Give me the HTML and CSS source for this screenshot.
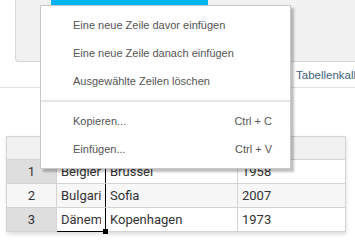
FILE: index.html
```html
<!DOCTYPE html>
<html>
<head>
<meta charset="utf-8">
<link rel="stylesheet" href="styles.css">
</head>
<body>
<div class="page">
  <div class="toolbar">
    <div class="primary-btn"></div>
  </div>
  <div class="caption-row">
    <span class="caption">Tabellenkalkulation</span>
  </div>
  <div class="sheet-wrap">
    <table class="sheet">
      <colgroup>
        <col class="c-num"><col class="c-land"><col class="c-city"><col class="c-year">
      </colgroup>
      <thead>
        <tr><th class="num"></th><th>Land</th><th>Hauptstadt</th><th>Beitritt</th></tr>
      </thead>
      <tbody>
        <tr><td class="num">1</td><td class="sel"><div class="txt">Belgien</div></td><td>Brüssel</td><td>1958</td></tr>
        <tr class="even"><td class="num">2</td><td class="sel"><div class="txt">Bulgarien</div></td><td>Sofia</td><td>2007</td></tr>
        <tr><td class="num">3</td><td class="sel sel-bottom"><div class="txt">Dänemark</div><span class="handle"></span></td><td>Kopenhagen</td><td>1973</td></tr>
      </tbody>
    </table>
  </div>
</div>
<div class="menu">
  <div class="item">Eine neue Zeile davor einfügen</div>
  <div class="item">Eine neue Zeile danach einfügen</div>
  <div class="item">Ausgewählte Zeilen löschen</div>
  <div class="sep"></div>
  <div class="item"><span>Kopieren...</span><span class="key">Ctrl + C</span></div>
  <div class="item"><span>Einfügen...</span><span class="key">Ctrl + V</span></div>
</div>
</body>
</html>
```
FILE: styles.css
```css
html, body {
  margin: 0;
  padding: 0;
  background: #fff;
  width: 355px;
  height: 242px;
  overflow: hidden;
}
.page {
  display: flex;
  flex-direction: column;
}
.toolbar {
  margin-left: 15px;
  height: 61px;
  background: #f1f1f1;
  border-left: 1px solid #d6d6d6;
  border-bottom: 1px solid #d6d6d6;
  border-bottom-left-radius: 4px;
}
.primary-btn {
  margin-left: 35px;
  width: 157px;
  height: 5px;
  background: #00b4f0;
}
.caption-row {
  height: 25px;
  border-bottom: 1px solid #e3e3e3;
  display: flex;
  align-items: center;
  padding-left: 296px;
  white-space: nowrap;
  overflow: hidden;
}
.caption {
  font-family: "Liberation Sans", Arial, sans-serif;
  font-size: 11.5px;
  color: #3e5f80;
}
.sheet-wrap {
  margin-top: 48px;
  margin-left: 6px;
  width: 339px;
  box-shadow: 1px 2px 4px rgba(0,0,0,0.15);
}
.sheet {
  border-collapse: collapse;
  table-layout: fixed;
  width: 339px;
  font-family: Roboto, "Liberation Sans", sans-serif;
  font-size: 13px;
  color: #333;
}
.c-num { width: 50px; }
.c-land { width: 49px; }
.c-city { width: 132px; }
.c-year { width: 108px; }
.sheet th, .sheet td {
  border: 1px solid #d4d4d4;
  padding: 0 4px;
  white-space: nowrap;
  overflow: hidden;
  text-align: left;
}
.sheet th {
  height: 22px;
  background: #f1f1f1;
  font-weight: normal;
  color: #1e3f6e;
}
.sheet td {
  height: 23px;
}
.sheet tr.even td { background: #f7f7f7; }
.sheet td.num {
  background: #dedede;
  text-align: center;
}
.sheet td.sel {
  border-left: 1px solid #000;
  border-right: 1px solid #000;
  position: relative;
  overflow: visible;
}
.sheet td.sel-bottom { border-bottom: 1px solid #000; }
.txt {
  overflow: hidden;
  white-space: nowrap;
}
.handle {
  position: absolute;
  right: -3px;
  bottom: -3px;
  width: 5px;
  height: 5px;
  background: #000;
}
.menu {
  position: absolute;
  left: 40px;
  top: 5px;
  width: 249px;
  padding: 5px 0;
  background: #fff;
  border: 1px solid #c8c8c8;
  box-shadow: 3px 3px 2px rgba(0,0,0,0.25);
  font-family: "Liberation Sans", Arial, sans-serif;
  font-size: 11px;
  color: #555;
  display: flex;
  flex-direction: column;
}
.item {
  height: 28px;
  display: flex;
  align-items: center;
  justify-content: space-between;
  padding: 0 18px 0 32px;
}
.sep {
  height: 2px;
  margin: 5px 0;
  background: #e6e6e6;
}
.key { color: #555; }
```
